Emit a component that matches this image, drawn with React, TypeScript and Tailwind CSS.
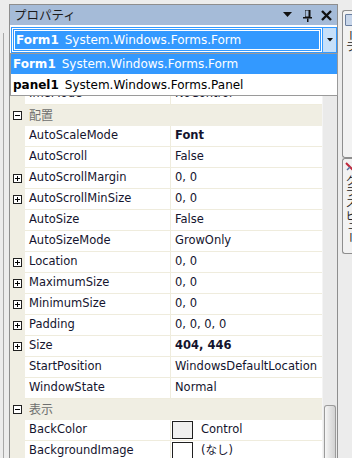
import React from "react";

type Row =
  | { kind: "cat"; label: string }
  | {
      kind: "prop";
      name: string;
      value: string;
      expand?: boolean;
      bold?: boolean;
      swatch?: string;
    };

const rows: Row[] = [
  { kind: "prop", name: "ImeMode", value: "NoControl" },
  { kind: "cat", label: "配置" },
  { kind: "prop", name: "AutoScaleMode", value: "Font", bold: true },
  { kind: "prop", name: "AutoScroll", value: "False" },
  { kind: "prop", name: "AutoScrollMargin", value: "0, 0", expand: true },
  { kind: "prop", name: "AutoScrollMinSize", value: "0, 0", expand: true },
  { kind: "prop", name: "AutoSize", value: "False" },
  { kind: "prop", name: "AutoSizeMode", value: "GrowOnly" },
  { kind: "prop", name: "Location", value: "0, 0", expand: true },
  { kind: "prop", name: "MaximumSize", value: "0, 0", expand: true },
  { kind: "prop", name: "MinimumSize", value: "0, 0", expand: true },
  { kind: "prop", name: "Padding", value: "0, 0, 0, 0", expand: true },
  { kind: "prop", name: "Size", value: "404, 446", expand: true, bold: true },
  { kind: "prop", name: "StartPosition", value: "WindowsDefaultLocation" },
  { kind: "prop", name: "WindowState", value: "Normal" },
  { kind: "cat", label: "表示" },
  { kind: "prop", name: "BackColor", value: "Control", swatch: "bg-[#f0f0f0]" },
  { kind: "prop", name: "BackgroundImage", value: "(なし)", swatch: "bg-white" },
];

const Box = ({ plus }: { plus: boolean }) => (
  <svg width="9" height="9" viewBox="0 0 9 9" className="block">
    <rect x="0.5" y="0.5" width="8" height="8" fill="white" stroke="#202020" />
    <line x1="2" y1="4.5" x2="7" y2="4.5" stroke="#000" />
    {plus && <line x1="4.5" y1="2" x2="4.5" y2="7" stroke="#000" />}
  </svg>
);

const GridRow = ({ row }: { row: Row }) => {
  if (row.kind === "cat") {
    return (
      <div className="flex h-[21px] items-center bg-[#f0eee3]">
        <div className="w-[15px] shrink-0 pl-[3px]">
          <Box plus={false} />
        </div>
        <span className="pl-[4px] text-[12px] text-[#6e6e6e]">{row.label}</span>
      </div>
    );
  }
  return (
    <div className="flex h-[21px]">
      <div className="flex w-[15px] shrink-0 items-center bg-[#f0eee3] pl-[3px]">
        {row.expand && <Box plus />}
      </div>
      <div className="flex w-[145px] shrink-0 items-center border-b border-[#efecdd] pl-[4px] text-[#14142e]">
        {row.name}
      </div>
      <div className="flex flex-1 items-center border-b border-l border-[#efecdd] pl-[4px] text-[#14142e]">
        {row.swatch && (
          <span
            className={`mr-[8px] -ml-[3px] h-[18px] w-[21px] shrink-0 border border-[#202020] ${row.swatch}`}
          />
        )}
        <span className={row.bold ? "font-bold" : ""}>{row.value}</span>
      </div>
    </div>
  );
};

export default function App() {
  return (
    <div className="relative flex h-[458px] w-[352px] overflow-hidden bg-[#ececec] font-['DejaVu_Sans','Noto_Sans_CJK_JP',sans-serif] text-[11.5px]">
      {/* left edge of editor area */}
      <div className="flex w-[9px] shrink-0 pt-[33px]">
        <div className="ml-[3px] h-full border-l border-[#a8a8a8]" />
      </div>

      {/* properties window */}
      <div className="relative mt-[4px] flex w-[329px] shrink-0 flex-col border-x border-t border-[#8e8e8e] bg-white">
        <div className="flex h-[20px] items-center bg-[#a5bbd8] pl-[4px] pr-[5px]">
          <span className="font-['Noto_Sans_CJK_JP',sans-serif] text-[12.5px] text-[#1c1c1c]">
            プロパティ
          </span>
          <div className="ml-auto flex items-center gap-[9px]">
            <svg width="10" height="6" viewBox="0 0 10 6">
              <path d="M0 0h9L4.5 5z" fill="#111" />
            </svg>
            <svg width="10" height="13" viewBox="0 0 10 13">
              <path d="M3 1h5v7H3z M7 1h1.5v7H7z" fill="#111" />
              <rect x="3.5" y="1.5" width="3" height="6" fill="#a5bbd8" />
              <rect x="1" y="8" width="9" height="1.5" fill="#111" />
              <rect x="5" y="9.5" width="1.5" height="3.5" fill="#111" />
            </svg>
            <svg width="11" height="11" viewBox="0 0 11 11">
              <path d="M1 1l9 9M10 1l-9 9" stroke="#111" strokeWidth="2.4" />
            </svg>
          </div>
        </div>

        <div className="h-[28px] bg-white pl-[1px] pt-[2px]">
          <div className="flex h-[26px] border border-[#3399ff] bg-white">
            <div className="m-[1px] flex flex-1 items-center bg-[#3399ff] pl-[3px] text-[12px] text-white outline outline-1 -outline-offset-2 outline-white">
              <span className="font-bold">Form1</span>
              <span className="ml-[6px]">System.Windows.Forms.Form</span>
            </div>
            <div className="flex w-[14px] items-center justify-center border-l border-[#3399ff] bg-[#c6e0fa]">
              <svg width="6" height="4" viewBox="0 0 6 4">
                <path d="M0 0h6L3 3.5z" fill="#111" />
              </svg>
            </div>
          </div>
        </div>

        {/* property grid */}
        <div className="flex flex-1 overflow-hidden">
          <div className="w-[312px] shrink-0 overflow-hidden">
            <div className="h-[31px] bg-[#f4f4f4]" />
            {rows.map((r, i) => (
              <GridRow key={i} row={r} />
            ))}
          </div>
          <div className="flex w-[15px] shrink-0 flex-col border-l border-[#f4f4f4] bg-[#eaeaea]">
            <div className="h-[352px]" />
            <div className="mx-[1px] flex-1 rounded-t-[3px] border border-b-0 border-[#9b9b9b] bg-gradient-to-r from-[#f6f6f6] via-[#e2e2e2] to-[#d2d2d2]" />
          </div>
        </div>

        {/* open dropdown list */}
        <div className="absolute left-0 top-[48px] w-[328px] border border-[#9a9a9a] bg-white text-[12px]">
          <div className="flex h-[20px] items-center bg-[#3399ff] pl-[2px] text-white">
            <span className="font-bold">Form1</span>
            <span className="ml-[6px]">System.Windows.Forms.Form</span>
          </div>
          <div className="flex h-[21px] items-center pl-[2px] text-black">
            <span className="font-bold">panel1</span>
            <span className="ml-[6px]">System.Windows.Forms.Panel</span>
          </div>
        </div>
      </div>

      {/* right auto-hide tab strip */}
      <div className="flex min-w-0 flex-1 flex-col overflow-hidden pl-[4px] pt-[10px]">
        <div className="h-[148px] w-[16px] shrink-0 overflow-hidden rounded-l-[3px] border border-r-0 border-[#8e8e8e] bg-[#f2f2f2]">
          <div className="ml-[2px] mt-[3px] h-[12px] w-[8px] rounded-[1px] border border-[#6a7fa0] bg-[#c8d6ea]" />
          <div className="mt-[4px] pl-[1px] font-['Noto_Sans_CJK_JP',sans-serif] text-[11px] leading-[14px] text-[#222] [writing-mode:vertical-rl]">
            ソリューション エクスプローラ
          </div>
        </div>
        <div className="h-[96px] w-[16px] shrink-0 overflow-hidden rounded-l-[3px] border border-r-0 border-[#8e8e8e] bg-[#f2f2f2]">
          <svg width="10" height="10" viewBox="0 0 10 10" className="ml-[2px] mt-[3px]">
            <path d="M1 1l7 7" stroke="#c0283c" strokeWidth="2" />
            <path d="M2 8l3-3" stroke="#5570a0" strokeWidth="1.5" />
          </svg>
          <div className="mt-[3px] pl-[1px] font-['Noto_Sans_CJK_JP',sans-serif] text-[11px] leading-[14px] text-[#222] [writing-mode:vertical-rl]">
            クラス ビュー
          </div>
        </div>
      </div>
    </div>
  );
}
